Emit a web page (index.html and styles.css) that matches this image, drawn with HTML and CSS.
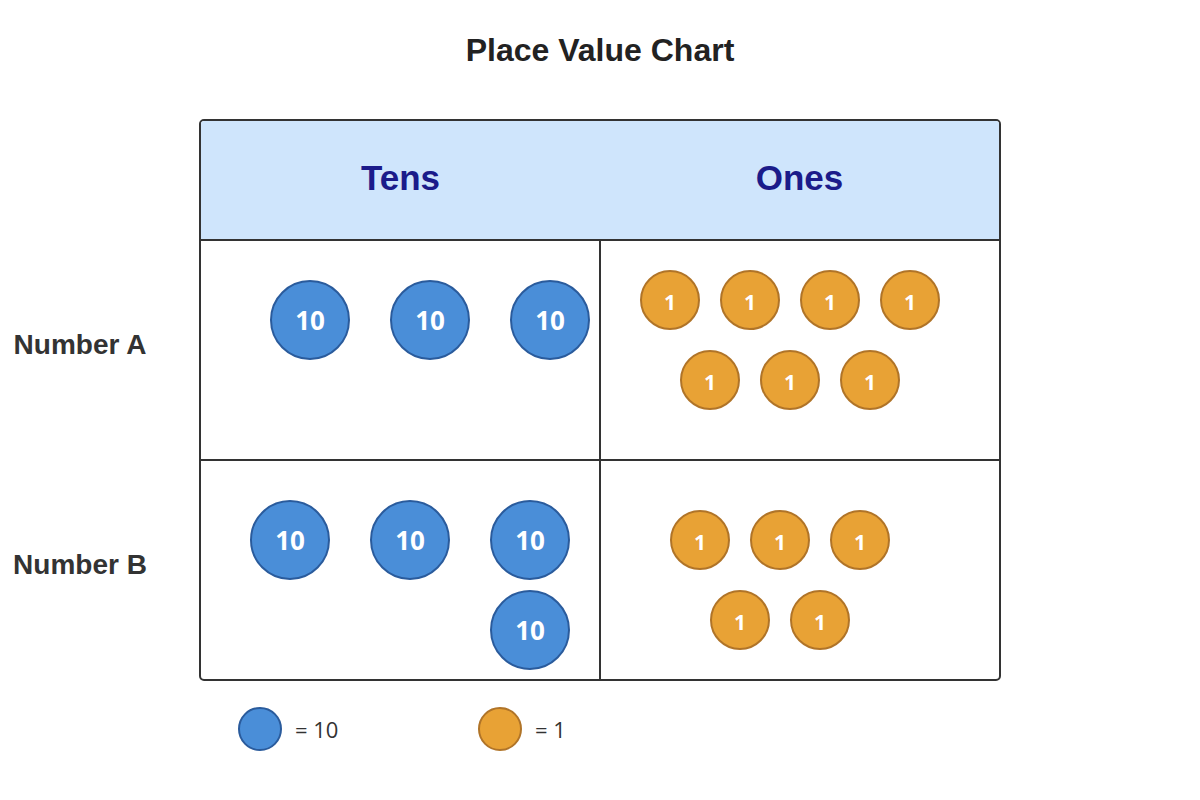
FILE: index.html
```html
<!DOCTYPE html>
<html>
<head>
<meta charset="utf-8">
<link rel="stylesheet" href="styles.css">
</head>
<body>
<h1 class="title">Place Value Chart</h1>
<div class="main">
  <div class="labels">
    <div class="label-spacer"></div>
    <div class="row-label">Number A</div>
    <div class="row-label">Number B</div>
  </div>
  <div class="chart">
    <div class="chart-head">
      <div class="head-cell">Tens</div>
      <div class="head-cell">Ones</div>
    </div>
    <div class="chart-row">
      <div class="cell tens-a">
        <div class="tens-grid">
          <div class="coin ten">10</div>
          <div class="coin ten">10</div>
          <div class="coin ten">10</div>
        </div>
      </div>
      <div class="cell ones ones-a">
        <div class="ones-line"><div class="coin one">1</div><div class="coin one">1</div><div class="coin one">1</div><div class="coin one">1</div></div>
        <div class="ones-line shift"><div class="coin one">1</div><div class="coin one">1</div><div class="coin one">1</div></div>
      </div>
    </div>
    <div class="chart-row">
      <div class="cell tens-b">
        <div class="tens-grid">
          <div class="coin ten">10</div>
          <div class="coin ten">10</div>
          <div class="coin ten">10</div>
          <div class="coin ten third">10</div>
        </div>
      </div>
      <div class="cell ones ones-b">
        <div class="ones-line"><div class="coin one">1</div><div class="coin one">1</div><div class="coin one">1</div></div>
        <div class="ones-line shift"><div class="coin one">1</div><div class="coin one">1</div></div>
      </div>
    </div>
  </div>
</div>
<div class="legend">
  <div class="legend-item"><span class="swatch ten"></span><span class="legend-text">= 10</span></div>
  <div class="legend-item"><span class="swatch one"></span><span class="legend-text">= 1</span></div>
</div>
</body>
</html>
```
FILE: styles.css
```css
html, body {
  margin: 0;
  padding: 0;
  background: #ffffff;
}
body {
  width: 1200px;
  height: 800px;
  font-family: "Liberation Sans", Arial, sans-serif;
  color: #333333;
}
.title {
  margin: 0;
  height: 100px;
  line-height: 100px;
  font-size: 32px;
  font-weight: bold;
  text-align: center;
  color: #222222;
}
.main {
  display: grid;
  grid-template-columns: 199px 802px;
  margin-top: 19px;
}
.labels {
  display: flex;
  flex-direction: column;
}
.label-spacer {
  height: 120px;
}
.row-label {
  height: 220px;
  box-sizing: border-box;
  padding-right: 39px;
  padding-bottom: 8px;
  display: flex;
  align-items: center;
  justify-content: center;
  font-size: 28px;
  font-weight: bold;
  color: #333333;
}
.chart {
  border: 2px solid #333333;
  border-radius: 5px;
  overflow: hidden;
  width: 802px;
  box-sizing: border-box;
}
.chart-head {
  display: grid;
  grid-template-columns: 1fr 1fr;
  height: 118px;
  background: #cfe5fc;
}
.head-cell {
  display: flex;
  align-items: center;
  justify-content: center;
  font-size: 35px;
  font-weight: bold;
  color: #1b1b8a;
  padding-bottom: 4px;
}
.chart-row {
  display: grid;
  grid-template-columns: 398px 400px;
  height: 220px;
  border-top: 2px solid #333333;
  box-sizing: border-box;
}
.cell {
  box-sizing: border-box;
}
.cell.ones {
  border-left: 2px solid #333333;
}
.tens-grid {
  display: grid;
  grid-template-columns: repeat(3, 80px);
  column-gap: 40px;
  row-gap: 10px;
}
.tens-a { padding: 39px 0 0 69px; }
.tens-b { padding: 39px 0 0 49px; }
.third { grid-column: 3; }
.ones {
  display: flex;
  flex-direction: column;
  gap: 20px;
}
.ones-a { padding: 29px 0 0 39px; }
.ones-b { padding: 49px 0 0 69px; }
.ones-line {
  display: flex;
  gap: 20px;
}
.ones-line.shift {
  padding-left: 40px;
}
.coin {
  box-sizing: border-box;
  border-radius: 50%;
  display: flex;
  align-items: center;
  justify-content: center;
  font-family: "Open Sans", "Liberation Sans", sans-serif;
  font-weight: bold;
  color: #ffffff;
}
.coin.ten {
  width: 80px;
  height: 80px;
  background: #4a8ed8;
  border: 2.5px solid #2a5b9c;
  font-size: 26px;
}
.coin.one {
  width: 60px;
  height: 60px;
  background: #e8a235;
  border: 2.5px solid #b07428;
  font-size: 21px;
  padding-top: 4px;
}
.legend {
  display: flex;
  padding-left: 238px;
  margin-top: 26px;
}
.legend-item {
  width: 240px;
  display: flex;
  align-items: center;
  gap: 13px;
}
.swatch {
  display: block;
  box-sizing: border-box;
  width: 44px;
  height: 44px;
  border-radius: 50%;
}
.swatch.ten {
  background: #4a8ed8;
  border: 2px solid #2a5b9c;
}
.swatch.one {
  background: #e8a235;
  border: 2px solid #b07428;
}
.legend-text {
  font-family: "Open Sans", "Liberation Sans", sans-serif;
  font-size: 22px;
  color: #333333;
}
```
